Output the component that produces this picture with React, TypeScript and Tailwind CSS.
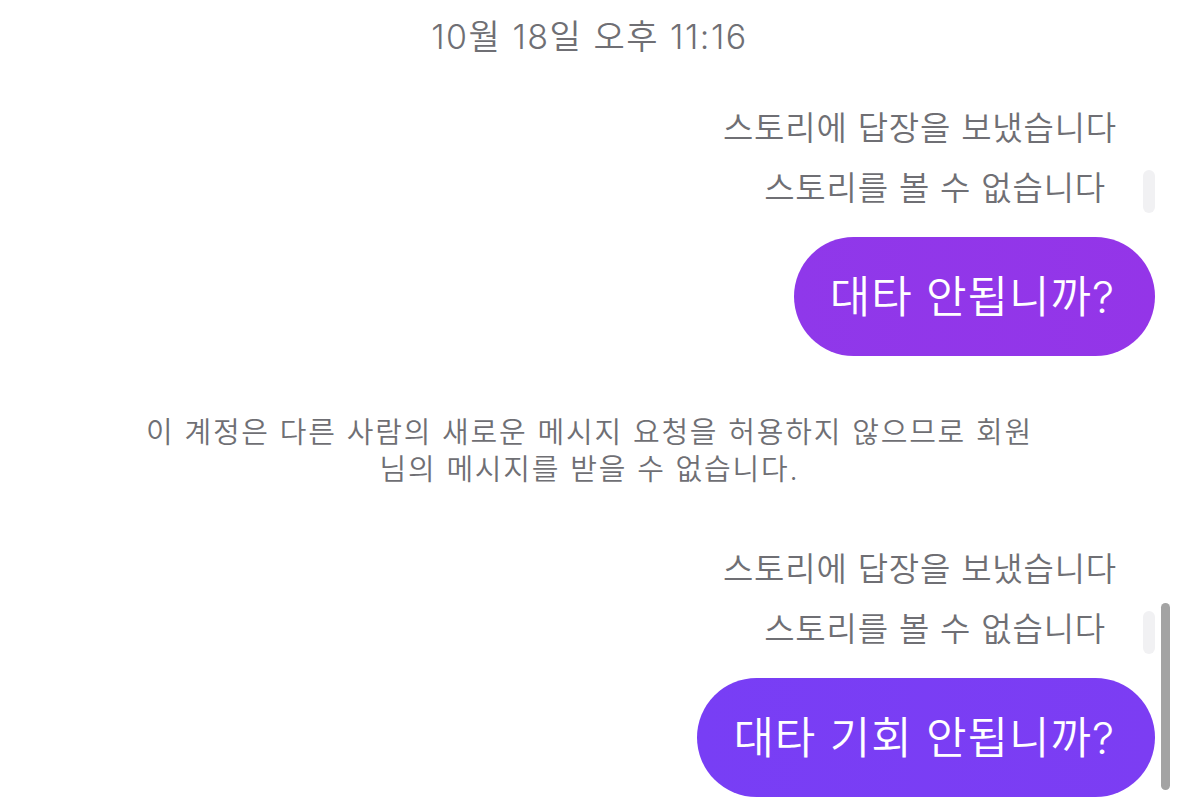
import React from "react";

const font = { fontFamily: '"Inter", "Noto Sans CJK KR", "Noto Sans", sans-serif' };

function StoryReply() {
  return (
    <div className="flex flex-col items-end">
      <div className="mr-[38px] text-[33px] leading-[38px] tracking-[0.8px] text-[#6f6f74]">스토리에 답장을 보냈습니다</div>
      <div className="mt-[22px] flex items-start">
        <div className="text-[33px] leading-[38px] tracking-[0.8px] text-[#6f6f74]">스토리를 볼 수 없습니다</div>
        <div className="ml-[37px] mt-[1px] h-[43px] w-[12px] rounded-[6px] bg-[#f1f1f3]" />
      </div>
    </div>
  );
}

function Bubble({ text, color }: { text: string; color: string }) {
  return (
    <div className="flex justify-end">
      <div className={`flex h-[119px] items-center rounded-full pl-[36px] pr-[40px] text-[44px] tracking-[1px] text-white ${color}`}>
        {text}
      </div>
    </div>
  );
}

export default function App() {
  return (
    <div className="relative h-[808px] w-full overflow-hidden bg-white font-[350]" style={font}>
      <div className="flex flex-col pr-[24px] pt-[19px]">
        <div className="pl-[24px] text-center text-[34px] leading-[36px] tracking-[1.5px] text-[#6f6f74]">10월 18일 오후 11:16</div>

        <div className="mt-[54px]">
          <StoryReply />
        </div>

        <div className="mt-[24px]">
          <Bubble text="대타 안됩니까?" color="bg-gradient-to-r from-[#8f38ea] to-[#9435e8]" />
        </div>

        <div className="mt-[58px] pl-[24px] text-center text-[29px] leading-[37px] tracking-[1.8px] text-[#6f6f74]">
          이 계정은 다른 사람의 새로운 메시지 요청을 허용하지 않으므로 회원
          <br />
          님의 메시지를 받을 수 없습니다.
        </div>

        <div className="mt-[62px]">
          <StoryReply />
        </div>

        <div className="mt-[24px]">
          <Bubble text="대타 기회 안됩니까?" color="bg-gradient-to-r from-[#783ef5] to-[#7c3df3]" />
        </div>
      </div>

      {/* overlay scrollbar */}
      <div className="absolute right-[9px] top-[603px] h-[187px] w-[9px] rounded-full bg-[#a3a3a3]" />
    </div>
  );
}
